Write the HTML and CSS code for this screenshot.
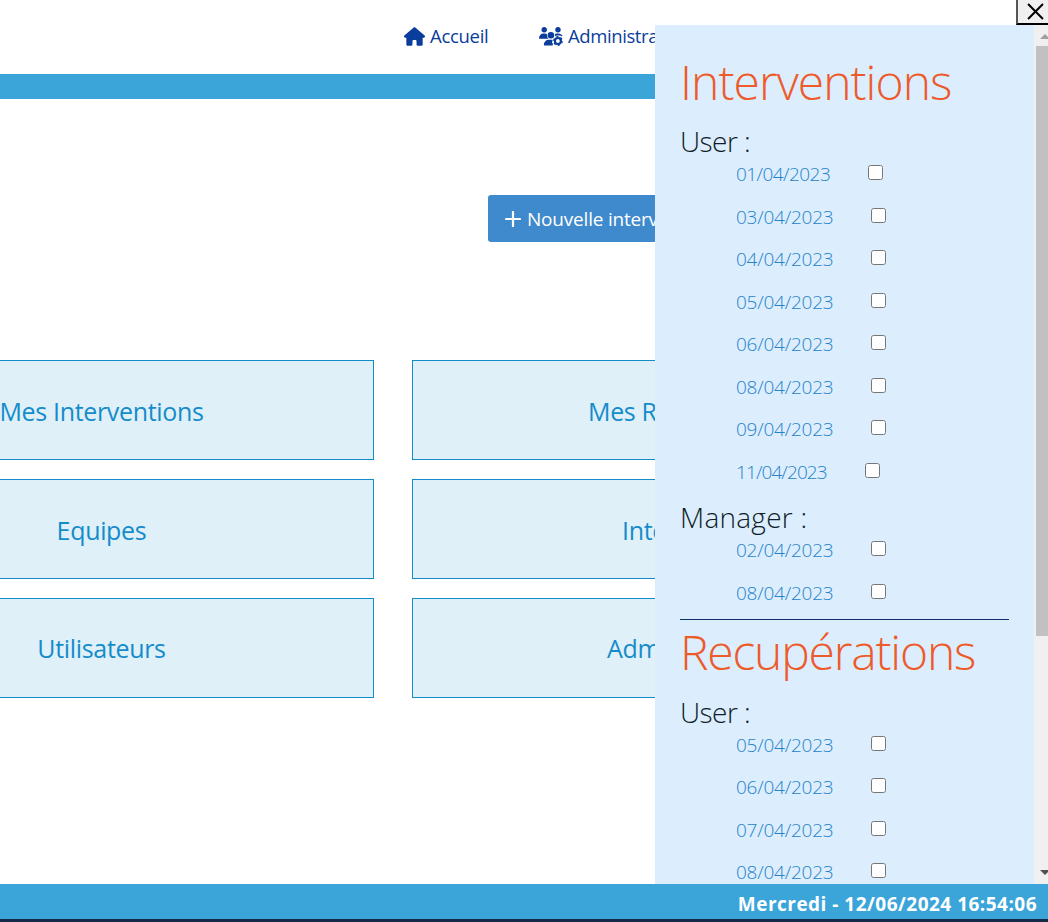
FILE: index.html
```html
<!DOCTYPE html>
<html lang="fr">
<head>
<meta charset="utf-8">
<title>Accueil</title>
<link rel="stylesheet" href="styles.css">
</head>
<body>
<div class="page">
  <header class="header">
    <a class="nav-link home"><svg class="ico-home" viewBox="0 0 576 512"><path fill="currentColor" d="M575.800 255.500c0 18-15 32.100-32 32.100h-32l.7 160.200c0 2.700-.2 5.400-.5 8.100V472c0 22.100-17.900 40-40 40h-88c-22.100 0-40-17.900-40-40v-88c0-17.700-14.300-32-32-32h-48c-17.700 0-32 14.300-32 32v88c0 22.100-17.900 40-40 40h-88c-22.100 0-40-17.900-40-40V287.600H32c-18 0-32-14-32-32.100 0-9 3-17 10-24L266.400 8c7-7 15-8 22-8s15 2 21 7l255.400 224.500c8 7 12 15 11 24z"/></svg><span class="t-home">Accueil</span></a>
    <a class="nav-link admin"><svg class="ico-users" viewBox="0 0 24 19"><g fill="currentColor"><circle cx="5.200" cy="2.700" r="2.700"/><circle cx="19" cy="2.700" r="2.700"/><path d="M0 11.500C0 8.500 1.800 6.500 4.500 6.500h1.400c.8 0 1.400.2 2 .5-.2 1.900.3 3.500 1.500 4.800H.6c-.4 0-.6-.1-.6-.3z"/><circle cx="11.900" cy="8.200" r="3.300"/><path d="M16 7c.6-.4 1.400-.5 2.200-.5h1.300c1.900 0 3.400 1 4.100 2.400l-1.200.3-1.100-.8h-3.800l-1.300 1.100z"/><path d="M4.900 18c0-3.200 2.200-5.200 5.200-5.200h3.200l.3 1-.7 1.500 1.100 1.600-.4 1.700H5.700c-.5 0-.8-.2-.8-.6z"/></g><circle cx="18.900" cy="14" r="3" fill="none" stroke="currentColor" stroke-width="2.200"/><circle cx="18.900" cy="14" r="4.300" fill="none" stroke="currentColor" stroke-width="1.200" stroke-dasharray="2.250 2.250"/></svg><span class="t-admin">Administra</span></a>
  </header>
  <div class="band"></div>
  <main class="main">
    <button class="new"><svg class="ico-plus" viewBox="0 0 16 16"><path d="M8 1v14M1 8h14" stroke="currentColor" stroke-width="2.200" stroke-linecap="round"/></svg><span>Nouvelle interv</span></button>
    <div class="tiles">
      <a class="tile"><span>Mes Interventions</span></a>
      <a class="tile side recups"><span>Mes R</span></a>
      <a class="tile"><span>Equipes</span></a>
      <a class="tile side inters"><span>Inte</span></a>
      <a class="tile last"><span>Utilisateurs</span></a>
      <a class="tile last side admins"><span>Adm</span></a>
    </div>
  </main>
  <footer class="footer"><span>Mercredi - 12/06/2024 16:54:06</span></footer>
  <div class="strip"></div>

  <button class="close"><svg viewBox="0 0 16 16"><path d="M1 1l14 14M15 1L1 15" stroke="#000" stroke-width="1.900"/></svg></button>
  <aside class="drawer">
    <div class="content">
      <h1 class="h-int"><span>Interventions</span></h1>
      <h2 class="user"><span>User :</span></h2>
      <ul>
        <li><span class="date one">01/04/2023</span><input type="checkbox"></li>
        <li><span class="date">03/04/2023</span><input type="checkbox"></li>
        <li><span class="date">04/04/2023</span><input type="checkbox"></li>
        <li><span class="date">05/04/2023</span><input type="checkbox"></li>
        <li><span class="date">06/04/2023</span><input type="checkbox"></li>
        <li><span class="date">08/04/2023</span><input type="checkbox"></li>
        <li><span class="date">09/04/2023</span><input type="checkbox"></li>
        <li><span class="date two">11/04/2023</span><input type="checkbox"></li>
      </ul>
      <h2 class="manager"><span>Manager :</span></h2>
      <ul>
        <li><span class="date">02/04/2023</span><input type="checkbox"></li>
        <li><span class="date">08/04/2023</span><input type="checkbox"></li>
      </ul>
      <hr>
      <h1 class="h-rec"><span>Recupérations</span></h1>
      <h2 class="user"><span>User :</span></h2>
      <ul>
        <li><span class="date">05/04/2023</span><input type="checkbox"></li>
        <li><span class="date">06/04/2023</span><input type="checkbox"></li>
        <li><span class="date">07/04/2023</span><input type="checkbox"></li>
        <li><span class="date">08/04/2023</span><input type="checkbox"></li>
      </ul>
    </div>
    <div class="scrollbar"><i class="up"></i><i class="thumb"></i><i class="down"></i></div>
  </aside>
</div>
</body>
</html>
```
FILE: styles.css
```css
* { box-sizing: border-box; }
body { margin: 0; font-family: "Open Sans", "Noto Sans", sans-serif; }
.page { position: relative; width: 1048px; height: 922px; overflow: hidden; display: flex; flex-direction: column; background: #fff; }
.header { height: 74px; flex: none; display: flex; padding: 23px 0 0 404px; color: #0b3d9c; white-space: nowrap; }
.nav-link { display: flex; align-items: center; height: 27px; font-size: 18.500px; }
.home { width: 135px; }
.nav-link svg { flex: none; }
.nav-link span { padding-bottom: 2px; }
.ico-home { width: 21px; height: 19px; margin-right: 5px; }
.ico-users { width: 24px; height: 19px; margin-right: 5px; }
.t-home { letter-spacing: -0.300px; }
.t-admin { letter-spacing: -0.400px; }
.band { height: 25px; flex: none; background: #3ba5da; }
.main { flex: 1; min-height: 0; padding-top: 96px; }
.new { display: flex; align-items: center; gap: 6px; margin: 0 0 118px 488px; width: 240px; height: 47px; padding: 0 0 0 17px; border: 0; border-radius: 3px; background: #3f89cd; color: #fff; font: 19px "Open Sans", sans-serif; letter-spacing: -0.200px; white-space: nowrap; }
.ico-plus { width: 16px; height: 16px; flex: none; }
.tiles { display: grid; grid-template-columns: 545px 545px; gap: 19px 38px; margin-left: -171px; }
.tile { height: 100px; display: flex; align-items: center; justify-content: center; padding-top: 2px; border: 1px solid #148cca; background: #dff0f9; color: #148cca; font-size: 25px; letter-spacing: -0.330px; white-space: nowrap; }
.last { padding-top: 0; }
.side { justify-content: flex-start; }
.recups { padding-left: 175px; }
.inters { padding-left: 209px; }
.admins { padding-left: 194px; }
.footer { height: 35px; flex: none; display: flex; align-items: center; justify-content: flex-end; padding: 4px 11px 0 0; background: #3ba5da; color: #fff; font-weight: 700; font-size: 19px; letter-spacing: 0.480px; white-space: nowrap; }
.strip { height: 3px; flex: none; background: #152845; }
.close { position: absolute; left: 1016px; top: -6px; width: 39px; height: 31px; padding: 7px 0 0 9px; border: 2px solid; border-color: #555 #000 #000 #555; background: #f0f0f0; display: flex; }
.close svg { width: 17px; height: 17px; }
.drawer { position: absolute; left: 655px; top: 25px; width: 396px; height: 859px; overflow: hidden; display: flex; background: #dcedfe; }
.content { width: 379px; padding: 25px 25px 0; }
h1, h2 { margin: 0; font-weight: 300; white-space: nowrap; }
h1 { height: 76px; line-height: 64px; font-size: 48px; color: #ed5b2b; }
.h-int { letter-spacing: -0.970px; }
.h-rec { height: 76.500px; letter-spacing: -1.200px; }
h2 { height: 32px; line-height: 30px; font-size: 28px; color: #111d28; }
.user { letter-spacing: -0.550px; }
ul { margin: 0; padding: 0 0 0 56px; list-style: none; }
li { display: flex; height: 42.500px; }
.date { flex: none; width: 97px; margin-right: 38px; line-height: 32.500px; font-size: 19px; font-weight: 300; letter-spacing: -0.230px; color: #2583c8; white-space: nowrap; }
.one { width: 94px; letter-spacing: -0.550px; }
.two { width: 91px; letter-spacing: -0.900px; }
li input { width: 15px; height: 15px; margin: 7px 0 0; }
.manager { margin-top: 4px; letter-spacing: 0.250px; }
hr { height: 1px; margin: 0; border: 0; background: #0e2f68; }
.scrollbar { width: 17px; height: 859px; padding: 9px 0 9px 2px; background: #f0f0f0; display: flex; flex-direction: column; }
.scrollbar i { display: block; }
.up { margin-left: 4px; width: 0; border: 5px solid transparent; border-top: 0; border-bottom-color: #a0a0a0; }
.thumb { width: 15px; height: 590px; margin-top: 7px; background: #c1c1c1; }
.down { margin: auto 0 0 4px; width: 0; border: 5px solid transparent; border-bottom: 0; border-top-color: #505050; }
```
